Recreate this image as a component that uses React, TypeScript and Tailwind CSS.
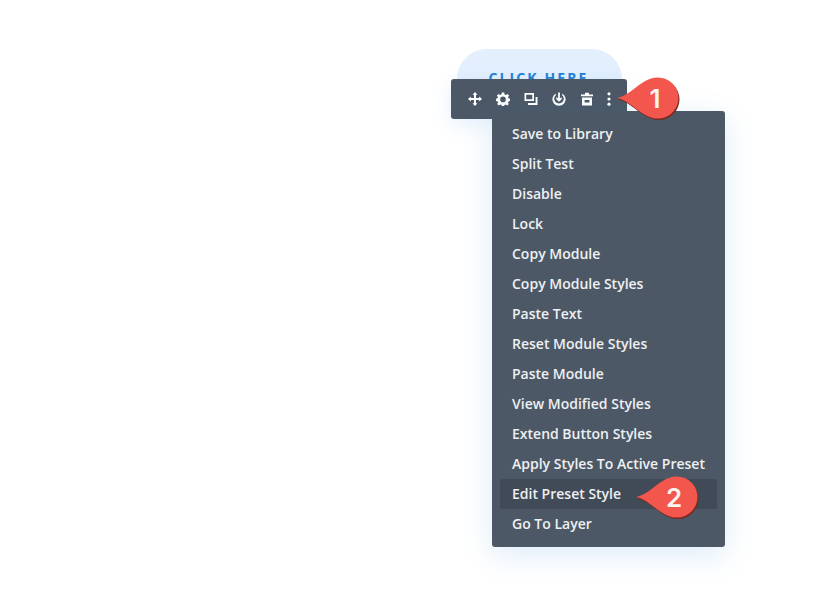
import { ReactNode } from "react";

const menuItems = [
  "Save to Library",
  "Split Test",
  "Disable",
  "Lock",
  "Copy Module",
  "Copy Module Styles",
  "Paste Text",
  "Reset Module Styles",
  "Paste Module",
  "View Modified Styles",
  "Extend Button Styles",
  "Apply Styles To Active Preset",
  "Edit Preset Style",
  "Go To Layer",
];

const pinPath =
  "M1 21 C11 19 18 11 26 6 C31 2.5 36 0.5 42 0.5 A20.5 20.5 0 0 1 42 41.5 C36 41.5 31 39.5 26 36 C18 31 11 23 1 21 Z";

function ToolIcon({ children }: { children: ReactNode }) {
  return (
    <div className="w-7 h-10 shrink-0 flex items-center justify-center">
      <svg width="16" height="16" viewBox="0 0 16 16" fill="white">
        {children}
      </svg>
    </div>
  );
}

function Pin({ label, className }: { label: string; className: string }) {
  return (
    <div className={className}>
      <svg width="66" height="46" viewBox="0 0 66 46" className="absolute left-0 top-0">
        <path d={pinPath} fill="#7a2a22" transform="translate(1 1.5)" />
        <path d={pinPath} fill="#f2564c" />
      </svg>
      <span className="absolute left-[23px] w-[32px] top-0 h-[42px] flex items-center justify-center text-[#fdf3ef] text-[26px] font-semibold font-['Inter',sans-serif]">
        {label}
      </span>
    </div>
  );
}

export default function App() {
  return (
    <div className="relative w-[826px] h-[594px] bg-white overflow-hidden font-['Open_Sans',sans-serif]">
      {/* Module button behind the toolbar */}
      <div className="ml-[457px] mt-[49px] w-[165px] h-[62px] pt-[18px] pr-[2px] rounded-t-[30px] bg-[#e3effd] text-center text-[14px] font-bold tracking-[2.1px] text-[#2480d6]">
        CLICK HERE
      </div>

      {/* Toolbar */}
      <div className="absolute left-[451px] top-[79px] w-[176px] h-[40px] pl-[10px] flex items-center rounded-[3px] bg-[#4c5866] shadow-[0_6px_20px_rgba(43,135,218,0.12)]">
        <ToolIcon>
          <path d="M8 1 L10.5 3.8 H9 V7 H12.2 V5.5 L15 8 L12.2 10.5 V9 H9 V12.2 H10.5 L8 15 L5.5 12.2 H7 V9 H3.8 V10.5 L1 8 L3.8 5.5 V7 H7 V3.8 H5.5 Z" />
        </ToolIcon>
        <ToolIcon>
          <path
            fillRule="evenodd"
            d="M6.8 1.5 H9.2 L9.6 3.4 L10.9 3.9 L12.5 2.9 L14.1 4.6 L13 6.2 L13.5 7.3 L15 7.8 V10 L13.4 10.4 L12.9 11.6 L13.8 13.1 L12.2 14.6 L10.7 13.6 L9.5 14.1 L9.1 15 H6.9 L6.5 14.1 L5.3 13.6 L3.8 14.6 L2.2 13.1 L3.1 11.6 L2.6 10.4 L1 10 V7.8 L2.5 7.3 L3 6.2 L1.9 4.6 L3.5 2.9 L5.1 3.9 L6.4 3.4 Z M8 5.6 A2.8 2.8 0 1 0 8 11.2 A2.8 2.8 0 1 0 8 5.6 Z"
          />
        </ToolIcon>
        <ToolIcon>
          <path
            fillRule="evenodd"
            d="M1.5 2 H11 V10 H1.5 Z M3.2 3.7 V8.3 H9.3 V3.7 Z M12.6 6 H14.5 V14 H5 V12 H12.6 Z"
          />
        </ToolIcon>
        <ToolIcon>
          <path
            fillRule="evenodd"
            d="M4.8 2.4 V4.2 A4.8 4.8 0 1 0 11.2 4.2 V2.4 A6.6 6.6 0 1 1 4.8 2.4 Z M7.1 1.5 H8.9 V7.6 L10.7 6 V8.2 L8 10.8 L5.3 8.2 V6 L7.1 7.6 Z"
          />
        </ToolIcon>
        <ToolIcon>
          <path
            fillRule="evenodd"
            d="M6 1.8 H10 V3.4 H14 V5.2 H2 V3.4 H6 Z M3 6.4 H13 V14.5 H3 Z M5.6 9 V11.6 H10.4 V9 Z"
          />
        </ToolIcon>
        <div className="w-4 h-10 shrink-0 flex items-center justify-center">
          <svg width="16" height="16" viewBox="0 0 16 16" fill="white">
            <circle cx="8" cy="2.8" r="1.6" />
            <circle cx="8" cy="8" r="1.6" />
            <circle cx="8" cy="13.2" r="1.6" />
          </svg>
        </div>
      </div>

      {/* Dropdown menu */}
      <div className="absolute left-[492px] top-[111px] w-[233px] h-[436px] pt-[8px] px-[8px] rounded-[3px] bg-[#4c5866] shadow-[0_8px_30px_rgba(43,135,218,0.16)]">
        {menuItems.map((item) => (
          <div
            key={item}
            className={
              item === "Edit Preset Style"
                ? "h-[30px] pl-[12px] pb-[2px] flex items-center rounded-[2px] bg-[#414b58] text-[14px] font-semibold text-[#eef0f2] whitespace-nowrap"
                : "h-[30px] pl-[12px] pb-[2px] flex items-center text-[14px] font-semibold text-[#eef0f2] whitespace-nowrap"
            }
          >
            {item}
          </div>
        ))}
      </div>

      <Pin label="1" className="absolute left-[616px] top-[77px] w-[66px] h-[46px]" />
      <Pin label="2" className="absolute left-[635px] top-[476px] w-[66px] h-[46px]" />
    </div>
  );
}
